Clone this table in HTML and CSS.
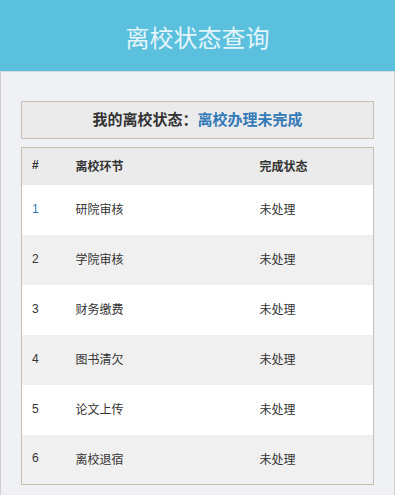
FILE: index.html
```html
<!DOCTYPE html>
<html lang="zh-CN">
<head>
<meta charset="utf-8">
<title>离校状态查询</title>
<link rel="stylesheet" href="styles.css">
</head>
<body>
<div class="page">
  <header class="topbar">
    <h1 class="title">离校状态查询</h1>
  </header>
  <main class="content">
    <div class="status-box">
      <span class="status-label">我的离校状态：</span><span class="status-value">离校办理未完成</span>
    </div>
    <table class="steps">
      <thead>
        <tr><th class="c-num">#</th><th class="c-step">离校环节</th><th class="c-state">完成状态</th></tr>
      </thead>
      <tbody>
        <tr><td class="c-num first">1</td><td>研院审核</td><td>未处理</td></tr>
        <tr><td class="c-num">2</td><td>学院审核</td><td>未处理</td></tr>
        <tr><td class="c-num">3</td><td>财务缴费</td><td>未处理</td></tr>
        <tr><td class="c-num">4</td><td>图书清欠</td><td>未处理</td></tr>
        <tr><td class="c-num">5</td><td>论文上传</td><td>未处理</td></tr>
        <tr><td class="c-num">6</td><td>离校退宿</td><td>未处理</td></tr>
      </tbody>
    </table>
  </main>
</div>
</body>
</html>
```
FILE: styles.css
```css
* { box-sizing: border-box; }
html, body { margin: 0; padding: 0; }
body {
  font-family: "Liberation Sans", "Noto Sans CJK SC", sans-serif;
  color: #333;
  background: #f0f1f5;
}
.page {
  min-height: 495px;
  background: #f0f1f5;
  border-left: 1px solid #cfcfd3;
  border-right: 1px solid #cfcfd3;
}
.topbar {
  height: 72px;
  margin: 0 -1px;
  background: #5bc0de;
  border-bottom: 1px solid #d6d8dc;
  display: flex;
  align-items: center;
  justify-content: center;
}
.title {
  margin: 0;
  padding-top: 2px;
  font-family: "Noto Sans CJK SC", sans-serif;
  font-size: 24px;
  font-weight: normal;
  color: #e4f5fa;
  letter-spacing: 0;
}
.content {
  padding: 29px 20px 8px 20px;
}
.status-box {
  height: 38px;
  padding-bottom: 3px;
  background: #ebebeb;
  border: 1px solid #c9bfae;
  display: flex;
  align-items: center;
  justify-content: center;
  font-family: "Noto Sans CJK SC", sans-serif;
  font-size: 15px;
  font-weight: bold;
}
.status-label { color: #333; }
.status-value { color: #337ab7; }
.steps {
  margin-top: 8px;
  width: 100%;
  border-collapse: collapse;
  border: 1px solid #c9bfae;
  font-size: 12px;
  table-layout: fixed;
}
.steps th, .steps td {
  text-align: left;
  padding: 0 0 2px 10px;
  font-family: "Liberation Sans", "Noto Sans CJK SC", sans-serif;
}
.steps th {
  height: 37px;
  background: #ebebeb;
  font-weight: bold;
}
.steps td { height: 50px; }
.c-num { width: 44px; }
.c-step { width: 184px; }
.steps tbody tr:nth-child(odd) { background: #fff; }
.steps tbody tr:nth-child(even) { background: #f0f0f0; }
.first { color: #337ab7; }
```
